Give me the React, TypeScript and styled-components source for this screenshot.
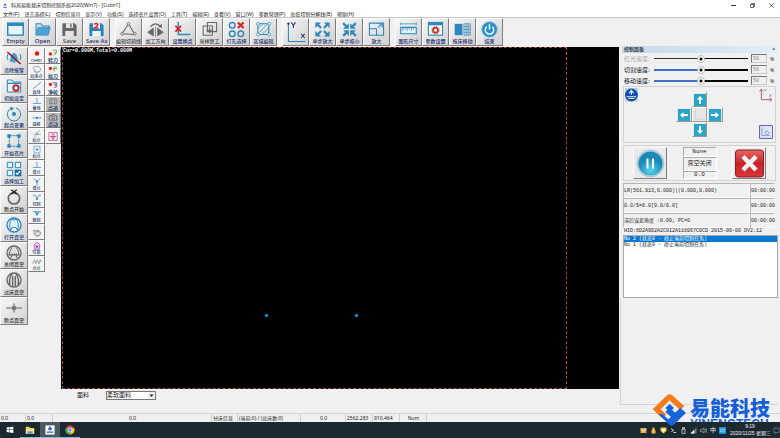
import React from "react";
import styled, { createGlobalStyle, css } from "styled-components";

const sans = `"Noto Sans", "Noto Sans CJK SC", sans-serif`;
const narrow = `"Liberation Sans", "Noto Sans CJK SC", sans-serif`;
const mono = `"Liberation Mono", "Noto Sans CJK SC", monospace`;

const GlobalStyle = createGlobalStyle`
  * { box-sizing: border-box; }
  body { margin: 0; background: #f0f0f0; }
  button, input, select { font-family: inherit; margin: 0; border-radius: 0; }
`;

const Desktop = styled.div`
  position: relative;
  display: flex;
  flex-direction: column;
  min-height: 100vh;
  background: #f0f0f0;
  color: #1c1c1c;
  font: 5px/8px ${sans};
  white-space: nowrap;
  overflow: hidden;
`;

/* ---------- window frame ---------- */
const TitleBar = styled.header`
  display: flex;
  align-items: center;
  height: 10px;
  padding: 0 1px 0 2px;
  gap: 3px;
  background: #fff;
`;
const Title = styled.h1`
  flex: 1;
  margin: 0;
  font: inherit;
`;
const CaptionButton = styled.button`
  display: grid;
  place-items: center;
  width: 16px;
  height: 9px;
  padding: 0;
  border: 0;
  background: none;
  svg { width: 5px; height: 5px; }
`;
const MenuBar = styled.nav`
  display: flex;
  height: 8px;
  padding: 0 3px;
  gap: 5px;
  background: #fff;
  border-bottom: 1px solid #c8c8c8;
  font-family: ${narrow};
`;
const MenuItem = styled.button`
  padding: 0;
  border: 0;
  background: none;
  color: #222;
  font-size: 5px;
  line-height: 6px;
`;

/* ---------- toolbar ---------- */
const Toolbar = styled.div`
  display: flex;
  gap: 5px;
  height: 28px;
  padding: 0 2px;
`;
const ToolGroup = styled.div`
  display: flex;
`;
const tile = css`
  display: flex;
  flex-direction: column;
  align-items: center;
  padding: 0;
  border: 1px solid #fafafa;
  border-right-color: #7d7d7d;
  border-bottom-color: #7d7d7d;
  background: linear-gradient(135deg, #f8f8f8, #cfcfcf);
`;
const ToolButton = styled.button<{ $muted?: boolean; $latin?: boolean }>`
  ${tile}
  width: 27px;
  height: 28px;
  color: ${(p) => (p.$muted ? "#3c3c3c" : "#1d2f6e")};
  font-size: ${(p) => (p.$latin ? "6px" : "5px")};
  font-weight: 500;
  line-height: 7px;
  svg { width: 19px; height: 17px; margin-top: 2px; flex: none; }
  span { z-index: 1; }
`;

/* ---------- workspace ---------- */
const Workspace = styled.main`
  display: flex;
  flex: 1;
`;
const SideTools = styled.aside`
  display: flex;
  align-items: flex-start;
  width: 61px;
  padding-top: 1px;
`;
const MainSteps = styled.div`
  display: grid;
  grid-template-rows: repeat(10, 1fr);
  width: 28px;
  height: 278px;
`;
const StepButton = styled.button<{ $muted?: boolean }>`
  ${tile}
  justify-content: space-between;
  min-height: 0;
  padding: 2px 0 1px;
  color: ${(p) => (p.$muted ? "#333" : "#1c3a78")};
  font-size: 5px;
  font-weight: 500;
  line-height: 6px;
  svg { width: 18px; height: 16px; flex: none; }
`;
const SmallColumn = styled.div<{ $wide?: boolean }>`
  display: flex;
  flex-direction: column;
  width: ${(p) => (p.$wide ? "16px" : "17px")};
  padding-top: 1px;
`;
const SmallButton = styled.button<{ $pressed?: boolean; $bold?: boolean }>`
  ${tile}
  justify-content: center;
  height: 16px;
  background: ${(p) => (p.$pressed ? "#b9b9b9" : "#f4f4f4")};
  color: #26406f;
  font-size: ${(p) => (p.$bold ? "5px" : "4px")};
  font-weight: ${(p) => (p.$bold ? 700 : 500)};
  line-height: 5px;
  svg { width: 12px; height: 9px; flex: none; }
`;

const CanvasColumn = styled.section`
  display: flex;
  flex-direction: column;
  flex: 1;
  min-width: 0;
`;
const Stage = styled.div`
  display: flex;
  flex: 1;
  margin-top: 1px;
  padding: 0 52px 0 1px;
  background: #000;
`;
const CutArea = styled.div`
  position: relative;
  flex: 1;
  border: 1px dashed #a04848;
  color: #fff;
  font: 700 5px/7px ${mono};
`;
const Marker = styled.i<{ $x: number; $y: number }>`
  position: absolute;
  left: ${(p) => p.$x}%;
  top: ${(p) => p.$y}%;
  width: 3px;
  height: 3px;
  background: #1490d8;
  transform: rotate(45deg);
`;
const FabricRow = styled.div`
  display: flex;
  align-items: flex-start;
  gap: 17px;
  height: 24px;
  padding: 2px 16px 0;
  label { font-size: 6px; line-height: 8px; }
`;
const SelectBox = styled.div`
  display: flex;
  align-items: center;
  width: 50px;
  height: 9px;
  border: 1px solid #777;
  background: #fff;
  select {
    flex: 1;
    min-width: 0;
    height: 7px;
    padding: 0;
    border: 0;
    appearance: none;
    background: none;
    color: #222;
    font-size: 6px;
    line-height: 7px;
  }
  svg { width: 7px; height: 7px; background: #eee; flex: none; }
`;

/* ---------- control panel ---------- */
const Panel = styled.aside`
  display: flex;
  flex-direction: column;
  width: 161px;
  padding: 0 2px 8px 3px;
`;
const PanelTitle = styled.h2`
  display: flex;
  justify-content: space-between;
  height: 7px;
  margin: 0;
  padding: 0 3px 0 2px;
  background: linear-gradient(90deg, #c5d8ea, #e3edf6);
  font: 500 5px/7px ${sans};
`;
const SliderRow = styled.div<{ $off?: boolean }>`
  display: grid;
  grid-template-columns: 29px 94px 16px 4px;
  align-items: center;
  column-gap: 3px;
  height: 11px;
  label, span { font-size: 6px; line-height: 8px; }
  label { padding-left: 2px; color: ${(p) => (p.$off ? "#aaa" : "#111")}; }
  span { font-size: 5px; }
`;
const Slider = styled.input<{ $off?: boolean }>`
  appearance: none;
  width: 100%;
  height: 8px;
  margin: 0;
  background:
    linear-gradient(90deg, ${(p) => (p.$off ? "#333" : "#3f70d0")} 50%, #080808 50%)
    center / 100% ${(p) => (p.$off ? "1px" : "2px")} no-repeat;
  &::-webkit-slider-thumb {
    appearance: none;
    width: 8px;
    height: 8px;
    border: 1px solid #bbb;
    border-radius: 50%;
    background: radial-gradient(circle, #111 0 1px, #fff 2px);
  }
`;
const ValueBox = styled.input`
  width: 16px;
  height: 9px;
  padding: 0 1px;
  border: 1px solid #c9c9c9;
  border-top-color: #777;
  border-left-color: #777;
  background: #efefef;
  color: #888;
  font: 5px/7px ${mono};
`;
const Group = styled.div`
  border: 1px solid #d2d2d2;
  margin: 0 2px 0 1px;
`;
const JogGroup = styled(Group)`
  display: flex;
  justify-content: space-between;
  height: 57px;
`;
const CornerStack = styled.div`
  display: flex;
  flex-direction: column;
  justify-content: space-between;
  padding: 1px 2px 3px 1px;
  svg { display: block; width: 14px; height: 14px; }
`;
const JogPad = styled.div`
  display: grid;
  grid-template-columns: 16px 15px 16px;
  grid-template-rows: 15px 15px 15px;
  grid-template-areas: ". up ." "left mid right" ". down .";
  padding: 5px 0;
`;
const JogButton = styled.button<{ $area: string }>`
  grid-area: ${(p) => p.$area};
  display: grid;
  place-items: center;
  padding: 0;
  border: 1px solid #f7f7f7;
  border-right-color: #999;
  border-bottom-color: #999;
  background: #e6e6e6;
  svg { width: 12px; height: 12px; }
`;
const RunGroup = styled(Group)`
  display: flex;
  justify-content: space-between;
  height: 36px;
  margin-top: 2px;
  padding: 1px 9px;
`;
const RunButton = styled.button`
  ${tile}
  justify-content: center;
  width: 34px;
  height: 32px;
  background: #e9e9e9;
  svg { width: 31px; height: 29px; }
`;
const StatusStack = styled.div`
  display: grid;
  grid-template-rows: 10px 14px 8px;
  width: 34px;
  text-align: center;
  font: 6px/6px ${mono};
  output {
    display: grid;
    place-items: center;
    border: 1px solid #fff;
    border-top-color: #aaa;
    border-left-color: #aaa;
  }
`;
const Readout = styled.table`
  width: 152px;
  margin: 2px 2px 0 1px;
  border-collapse: separate;
  border-spacing: 0;
  table-layout: fixed;
  font: 5px/6px ${mono};
  td {
    height: 15px;
    padding: 0;
    border: 1px solid #fbfbfb;
    border-top-color: #b5b5b5;
    border-left-color: #b5b5b5;
  }
  td + td { width: 25px; }
`;
const HardwareId = styled.p`
  margin: 0 0 1px 2px;
  font: 5px/6px ${mono};
`;
const LogList = styled.ul`
  height: 63px;
  margin: 0 0 0 1px;
  padding: 0;
  list-style: none;
  border: 1px solid #aaa;
  background: #fff;
  font: 5px/6px ${mono};
`;
const LogItem = styled.li<{ $selected?: boolean }>`
  height: 6px;
  background: ${(p) => (p.$selected ? "#0a78d4" : "transparent")};
  color: ${(p) => (p.$selected ? "#fff" : "#222")};
`;
const DockEdge = styled.div`
  flex: 1;
  border: solid #d4d4d4;
  border-width: 0 0 1px 1px;
  margin-left: -2px;
`;

/* ---------- status bar and taskbar ---------- */
const StatusBar = styled.footer`
  display: grid;
  grid-template-columns: 26px 27px 159px 26px 63px 45px 27px 27px 27px 1fr;
  height: 9px;
  border-top: 1px solid #d6d6d6;
  font-size: 5px;
  line-height: 8px;
  span { padding-left: 1px; border-right: 1px solid #cfcfcf; }
  span:last-child { border: 0; }
`;
const Centered = styled.span`
  text-align: center;
`;
const Taskbar = styled.footer`
  position: relative;
  z-index: 2;
  display: flex;
  align-items: stretch;
  height: 16px;
  background: #1a2a30;
  color: #f2f5f6;
`;
const TaskButton = styled.button<{ $active?: boolean; $running?: boolean }>`
  display: grid;
  place-items: center;
  width: 20px;
  padding: 0;
  border: 0;
  border-bottom: 1px solid ${(p) => (p.$running ? "#78b8e0" : "transparent")};
  background: ${(p) => (p.$active ? "#4b5960" : "none")};
  svg { width: 10px; height: 10px; }
`;
const Tray = styled.div`
  display: flex;
  align-items: center;
  gap: 3px;
  margin-left: auto;
  font-size: 6px;
  svg { width: 7px; height: 7px; }
`;
const Clock = styled.time`
  width: 40px;
  margin-left: 1px;
  text-align: center;
  font: 5px/7px ${narrow};
`;

/* ---------- brand overlay ---------- */
const BrandMark = styled.svg`
  position: absolute;
  z-index: 3;
  right: 93px;
  bottom: 11px;
  width: 35px;
  height: 33px;
`;
const BrandText = styled.div`
  position: absolute;
  z-index: 1;
  right: 10px;
  bottom: 9px;
  width: 80px;
  color: #1560d8;
  font: 900 20px/23px "Noto Sans CJK SC", sans-serif;
  small {
    display: block;
    font: 700 12px/10px "Liberation Sans", sans-serif;
  }
`;

/* ---------- drawings ---------- */
const B = "#2d86bd";
const G = "#666";
const R = "#d22";

const art: Record<string, React.ReactNode> = {
  window: <><rect x="1" y="3" width="22" height="17" fill="#e4f2fa" stroke={B} strokeWidth="2" /><path d="M1 5h22" stroke={B} strokeWidth="4" /></>,
  folder: <><path d="M3 20V4h7l2 3h9v4" fill="#c6e3f4" stroke={B} strokeWidth="1.5" /><path d="M3 20 6 9h17l-3 11z" fill="#4da1d6" stroke={B} /></>,
  save: <><path d="M2 3h17l3 3v15H2z" fill={G} /><path d="M7 3h10v7H7zM6 14h12v7H6z" fill="#e6e6e6" /><path d="M13 4h2v5h-2z" fill={G} /></>,
  saveAs: <><path d="M2 3h17l3 3v15H2z" fill="#2783c0" /><path d="M7 3h10v8H7zM6 14h12v7H6z" fill="#eef6fb" /><path d="M9 5q3-3 5 0 0 2-5 5h6" fill="none" stroke={R} strokeWidth="2" /></>,
  triangle: <><path d="M12 4 3 18l18 1z" fill="none" stroke={G} strokeWidth="1.5" /><g fill="#ddd" stroke={G}><circle cx="12" cy="4" r="2" /><circle cx="3" cy="18" r="2" /><circle cx="21" cy="18" r="2" /></g></>,
  flip: <><path d="M12 8v15M9 10v11L1 16zM15 10v11l8-5z" fill={G} stroke={G} /><path d="M5 8q7-8 14 0" fill="none" stroke={G} strokeWidth="2" /><path d="m16 8 5 2V4z" fill={G} /></>,
  origin: <><path d="M6 1v18h17" fill="none" stroke={B} strokeWidth="2" /><path d="m2 7 8 8m0-8-8 8" stroke={R} strokeWidth="2.5" /></>,
  sample: <><path d="M3 7h13v13H3zM9 2h13v13H9z" fill="none" stroke={G} strokeWidth="1.5" /><path d="M8 13h8m-4-4v8" stroke={G} strokeWidth="1.5" /></>,
  holes: <><g fill="none" stroke={B} strokeWidth="2"><circle cx="6" cy="6" r="4" /><circle cx="6" cy="18" r="4" /><circle cx="18" cy="18" r="4" /></g><path d="m14 2 8 8m0-8-8 8" stroke={R} strokeWidth="3" /></>,
  region: <><path d="M4 4h16l-1 15H4z" fill="none" stroke={B} strokeWidth="1.5" /><path d="M4 11 11 4M4 18 18 4M10 19 20 9" stroke={B} /><g fill="#fff" stroke={B}><circle cx="4" cy="4" r="2" /><circle cx="20" cy="4" r="2" /><circle cx="4" cy="19" r="2" /><circle cx="20" cy="19" r="2" /></g></>,
  expand: <><path d="m10 10-6-6m10 6 6-6M10 14l-6 6m10-6 6 6" stroke={B} strokeWidth="3" /><path d="M2 2h8L2 10zm20 0v8l-8-8zM2 22v-8l8 8zm20 0h-8l8-8z" fill={B} /></>,
  shrink: <><path d="m3 3 6 6m12-6-6 6M3 21l6-6m12 6-6-6" stroke={B} strokeWidth="3" /><path d="M11 11H3l8-8zm2 0V3l8 8zm-2 2v8l-8-8zm2 0h8l-8 8z" fill={B} /></>,
  zoom: <><path d="M2 3h20v17H2z" fill="none" stroke={B} strokeWidth="1.5" /><path d="M2 11h10v9M14 9l6-5m-5 0h5v5" fill="none" stroke={B} strokeWidth="1.5" /></>,
  ruler: <><path d="M1 4h22M1 2v4m22-4v4" stroke={B} /><path d="M1 9h22v9H1z" fill="#dff0f8" stroke={B} strokeWidth="1.5" /><path d="M4 9v5m3-5v3m3-3v5m3-5v3m3-3v5m3-5v3" stroke={B} /></>,
  settings: <><rect x="2" y="2" width="20" height="18" fill="#edf6fa" stroke={B} strokeWidth="1.5" /><path d="M2 4h20" stroke={B} strokeWidth="4" /><circle cx="12" cy="13" r="3.5" fill="none" stroke="#c32" strokeWidth="2.5" /><circle cx="12" cy="13" r="5.3" fill="none" stroke="#c32" strokeDasharray="2 2.2" /></>,
  bed: <><path d="M1 4h11v16H1z" fill={B} /><path d="M14 4h9v16h-9zm3 0v16m3-16v16m-6-12h9m-9 4h9m-9 4h9" fill="none" stroke={B} /></>,
  power: <><circle cx="12" cy="12" r="11" fill="#2b8fca" stroke="#8cbfdd" /><path d="M8 8a6 6 0 1 0 8 0M12 4v8" fill="none" stroke="#fff" strokeWidth="2" /></>,
  bell: <><path d="M6 17c2-2 1-5 2-8 1-5 7-5 8 0 1 3 0 6 2 8zM10 19h4" fill="#4b9ad0" stroke={B} /><path d="M3 6q-3 5 0 9M21 6q3 5 0 9" stroke={B} strokeWidth="1.5" fill="none" /><path d="m2 3 20 18" stroke="#822838" strokeWidth="2.5" /></>,
  folderGear: <><path d="M2 21V3h7l2 3h11v15z" fill="#edf6fa" stroke={B} strokeWidth="1.5" /><path d="M2 8h20" stroke={B} strokeWidth="2" /><circle cx="15" cy="15" r="4" fill="#fff" stroke="#b42b38" strokeWidth="3" /></>,
  rotate: <><path d="M9 3a10 10 0 1 0 6 0" fill="none" stroke={B} strokeWidth="1.5" /><path d="m6 1 6 2-4 4z" fill={B} /><circle cx="12" cy="12" r="3" fill={B} /></>,
  nodes: <><path d="M5 4h14v16H5z" fill="none" stroke={B} strokeWidth="1.5" strokeDasharray="4 1" /><path d="M2 2h5v5H2zm15 0h5v5h-5zM2 17h5v5H2zm15 0h5v5h-5z" fill={B} /></>,
  pick: <><path d="M2 2h8v8H2zm12 0h8v8h-8zM2 14h8v8H2z" fill="#e9f4fa" stroke={B} strokeWidth="1.5" /><path d="M13 13h10v10H13z" fill="#1869a5" /><path d="m15 18 2 2 4-5" fill="none" stroke="#fff" strokeWidth="2" /></>,
  breakPt: <><circle cx="12" cy="14" r="8.5" fill="none" stroke="#666" strokeWidth="2.5" /><path d="m8 1 8 7m0-7L8 8" stroke="#222" strokeWidth="2" /></>,
  vacOn: <><circle cx="12" cy="12" r="10.5" fill="#daeef8" stroke={B} strokeWidth="2" /><path d="M9 3C5 8 5 15 7 20M15 3c4 5 4 12 2 17M9 3c2 2 4 2 6 0M7 20l2-4h6l2 4" fill="#fff" stroke={B} strokeWidth="1.5" /></>,
  vacOff: <><circle cx="12" cy="12" r="10.5" fill="#ddd" stroke={G} strokeWidth="2" /><path d="M9 4C5 9 5 11 5 14h14c0-4 0-6-4-10M3 15h18M7 20l2-5m8 5-2-5" fill="none" stroke={G} strokeWidth="1.5" /></>,
  vacBed: <><circle cx="12" cy="12" r="10.5" fill="#ddd" stroke={G} strokeWidth="2" /><path d="M9 3C4 9 5 15 6 20M15 3c5 6 4 12 3 17M10 6v15m4-15v15" fill="none" stroke={G} strokeWidth="2" /></>,
  vacPt: <><path d="M0 12h24M12 5v14" stroke={G} strokeWidth="1.5" /><circle cx="12" cy="12" r="3.5" fill="#777" /></>,
  dotRed: <circle cx="12" cy="12" r="6" fill="#e01818" />,
  start: <path d="M6 4h11l5 6-3 8h-5l-3 4-1-4H5l2-6-5-3z" fill="none" stroke="#568" strokeWidth="1.5" />,
  line: <path d="M1 21 23 3" stroke={B} strokeWidth="2" />,
  perp: <path d="M1 17h22M12 3v14" stroke={B} strokeWidth="2" />,
  horiz: <><path d="M0 13h24" stroke={B} strokeWidth="2" /><circle cx="12" cy="13" r="3" fill={B} /></>,
  cross: <path d="M2 14h20M5 22 19 3m-9 5 5 8" stroke="#678" strokeWidth="1.5" />,
  box: <><path d="M4 3h16v18H4z" fill="none" stroke={B} strokeWidth="1.5" /><circle cx="12" cy="12" r="3" fill={B} /></>,
  yNode: <><path d="M3 4l9 8 9-8m-9 8v11" fill="none" stroke={B} strokeWidth="2" /><circle cx="12" cy="12" r="3" fill={B} /></>,
  vGreen: <><path d="M1 6h6l5 9 5-9h6" fill="none" stroke={B} strokeWidth="2" /><circle cx="12" cy="16" r="3" fill="#32a457" /></>,
  vBlue: <path d="M1 7h6l5 10 5-10h6M8 7h8l-4 7z" fill={B} stroke={B} strokeWidth="2" />,
  hand: <path d="M5 11C1 7 4 4 8 7l5 3V6q3-2 3 2 6 1 5 7c-1 8-12 9-14 3l-3-4q0-3 4-1" fill="#ddd" stroke="#666" strokeWidth="2" />,
  house: <><path d="m3 12 9-9 9 9M6 11v11h12V11" fill="#f5d9f4" stroke="#a32fb3" strokeWidth="2" /><circle cx="12" cy="15" r="3" fill="#a32fb3" /></>,
  wave: <path d="m1 18 4-11 4 11 4-11 4 11 4-11 2 7" fill="none" stroke="#888" strokeWidth="2" />,
  knifeG: <><path d="M12 3h9v7l-8 7M15 10h7" fill="none" stroke="#62a52b" strokeWidth="2.5" /><circle cx="5" cy="13" r="4.5" fill="#e01818" /></>,
  knifeR: <><path d="M15 4v14m-4-8h12M20 3v8" stroke="#62a52b" strokeWidth="2.5" /><circle cx="5" cy="9" r="4.5" fill="#e01818" /></>,
  wheel: <><path d="M11 5h11v10l-7 3" fill="none" stroke="#a532c1" strokeWidth="2.5" /><circle cx="5" cy="9" r="4.5" fill="#e01818" /><circle cx="18" cy="10" r="3" fill="#62a52b" /></>,
  frame: <path d="M3 5h18v13H3zM8 5v13m8-13v13" fill="none" stroke="#777" strokeWidth="2" />,
  camera: <><path d="M2 7h5l2-3h7l2 3h4v12H2z" fill="none" stroke="#555" strokeWidth="2" /><circle cx="12" cy="12" r="4" fill="none" stroke="#555" strokeWidth="2" /></>,
  flow: <><path d="M1 1h9v7l-5 5h5v10H1zM23 1h-9v7l5 5h-5v10h9z" fill="#fff" stroke="#c5306a" strokeWidth="2" /><path d="M7 12h10" stroke="#8230b0" strokeWidth="2" /></>,
};

const Icon = ({ name }: { name: string }) => (
  <svg viewBox="0 0 24 24" aria-hidden="true" fill="none">{art[name]}</svg>
);
const AxisIcon = () => (
  <svg viewBox="0 0 24 24" aria-hidden="true" overflow="visible">
    <path d="M2 6v23h24" fill="none" stroke={B} strokeWidth="1.5" />
    <path d="m6 2 3 4 3-4M9 6v4M20 18l5 6m0-6-5 6M0 4h4M2 2v4" stroke="#26356f" strokeWidth="1.5" fill="none" />
  </svg>
);
const Arrow = ({ turn }: { turn: number }) => (
  <svg viewBox="0 0 24 24" aria-hidden="true">
    <rect width="24" height="24" fill="#2aa5c8" />
    <path transform={`rotate(${turn} 12 12)`} d="m12 4 6 7h-4v9h-4v-9H6z" fill="#fff" />
  </svg>
);

/* ---------- data ---------- */
const menus = ["文件(F)", "语言选择(L)", "切割信息(I)", "显示(V)", "功能(S)", "选择衣片设置(O)", "工具(T)", "编辑(E)", "查看(V)", "窗口(W)", "参数管理(P)", "高低切割分解线(B)", "帮助(H)"];

type Tool = { icon: string; text: string; muted?: boolean; latin?: boolean };
const toolGroups: Tool[][] = [
  [
    { icon: "window", text: "Empty", latin: true },
    { icon: "folder", text: "Open", latin: true },
    { icon: "save", text: "Save", latin: true, muted: true },
    { icon: "saveAs", text: "Save As", latin: true },
  ],
  [
    { icon: "triangle", text: "编辑切割线", muted: true },
    { icon: "flip", text: "加工方向", muted: true },
    { icon: "origin", text: "设置换点" },
    { icon: "sample", text: "采样复工", muted: true },
    { icon: "holes", text: "打孔选择" },
    { icon: "region", text: "区域编辑" },
  ],
  [
    { icon: "axis", text: "" },
    { icon: "expand", text: "单步放大" },
    { icon: "shrink", text: "单步缩小" },
    { icon: "zoom", text: "放大" },
  ],
  [
    { icon: "ruler", text: "图形尺寸" },
    { icon: "settings", text: "参数设置" },
    { icon: "bed", text: "拖床移动" },
    { icon: "power", text: "结束" },
  ],
];
const steps: Tool[] = [
  { icon: "bell", text: "清除报警" },
  { icon: "folderGear", text: "初始设定" },
  { icon: "rotate", text: "起点变更" },
  { icon: "nodes", text: "开始衣片" },
  { icon: "pick", text: "选择加工" },
  { icon: "breakPt", text: "断点开始", muted: true },
  { icon: "vacOn", text: "打开真空" },
  { icon: "vacOff", text: "关闭真空", muted: true },
  { icon: "vacBed", text: "过床真空", muted: true },
  { icon: "vacPt", text: "断点真空", muted: true },
];
const smallTools = [
  ["dotRed", "CHRD"], ["start", "起落点"], ["line", "直线"], ["perp", "垂线"], ["horiz", "端移"],
  ["cross", "起点"], ["box", "起点"], ["perp", "增点"], ["yNode", "增点"], ["vGreen", "切刻"],
  ["vBlue", "删刻"], ["hand", ""], ["house", "性能"], ["wave", "点点"],
];
const knifeTools: [string, string, boolean][] = [
  ["knifeG", "转刀", false], ["knifeR", "抬刀", false], ["wheel", "净轮", false],
  ["frame", "点追", true], ["camera", "点动", true], ["flow", "", false],
];
const sliders = [
  { id: "red", text: "红光速度:", off: true },
  { id: "cut", text: "切割速度:", off: false },
  { id: "move", text: "移动速度:", off: false },
];
const readouts = [
  "LR(561.913,0.000)|(0.000,0.000)",
  "0.0/S=0.0[0.0/0.0]",
  "滞后误差角度 :0.00, PC=0",
];

export default function App() {
  return (
    <Desktop>
      <GlobalStyle />
      <TitleBar>
        <svg width="6" height="7" viewBox="0 0 12 14" aria-hidden="true">
          <path d="M6 2v7M2 11h8M3 8l3-4 3 4" fill="none" stroke="#3a6fa8" strokeWidth="1.5" />
        </svg>
        <Title>科昌易能裁床切割控制系统2020(Win7) - [Cutin1]</Title>
        <CaptionButton aria-label="最小化"><svg viewBox="0 0 10 10"><path d="M0 5h10" stroke="#333" strokeWidth="2" /></svg></CaptionButton>
        <CaptionButton aria-label="还原"><svg viewBox="0 0 10 10"><path d="M1 3h6v6H1zM3 3V1h6v6H7" fill="none" stroke="#333" strokeWidth="1.5" /></svg></CaptionButton>
        <CaptionButton aria-label="关闭"><svg viewBox="0 0 10 10"><path d="m1 1 8 8m0-8-8 8" stroke="#333" strokeWidth="1.5" /></svg></CaptionButton>
      </TitleBar>
      <MenuBar>{menus.map((m) => <MenuItem key={m}>{m}</MenuItem>)}</MenuBar>

      <Toolbar>
        {toolGroups.map((group, i) => (
          <ToolGroup key={i}>
            {group.map((t) => (
              <ToolButton key={t.icon} $muted={t.muted} $latin={t.latin} aria-label={t.text || "坐标轴"}>
                {t.icon === "axis" ? <AxisIcon /> : <Icon name={t.icon} />}
                <span>{t.text}</span>
              </ToolButton>
            ))}
          </ToolGroup>
        ))}
      </Toolbar>

      <Workspace>
        <SideTools>
          <MainSteps>
            {steps.map((s) => (
              <StepButton key={s.text} $muted={s.muted}><Icon name={s.icon} />{s.text}</StepButton>
            ))}
          </MainSteps>
          <SmallColumn>
            {smallTools.map(([icon, text], i) => (
              <SmallButton key={i} aria-label={text || "拖动"}><Icon name={icon} />{text}</SmallButton>
            ))}
          </SmallColumn>
          <SmallColumn $wide>
            {knifeTools.map(([icon, text, pressed]) => (
              <SmallButton key={icon} $bold $pressed={pressed} aria-label={text || "流程"}><Icon name={icon} />{text}</SmallButton>
            ))}
          </SmallColumn>
        </SideTools>

        <CanvasColumn>
          <Stage>
            <CutArea>
              Cur=0.000M,Total=0.000M
              <Marker $x={40.2} $y={78.2} />
              <Marker $x={58.1} $y={78.2} />
            </CutArea>
          </Stage>
          <FabricRow>
            <label htmlFor="fabric">面料</label>
            <SelectBox>
              <select id="fabric" defaultValue="soft"><option value="soft">柔软面料</option></select>
              <svg viewBox="0 0 14 14" aria-hidden="true"><path d="M3 5h8l-4 5z" fill="#222" /></svg>
            </SelectBox>
          </FabricRow>
        </CanvasColumn>

        <Panel>
          <PanelTitle>控制面板<span>×</span></PanelTitle>
          {sliders.map((s) => (
            <SliderRow key={s.id} $off={s.off}>
              <label htmlFor={s.id}>{s.text}</label>
              <Slider id={s.id} type="range" defaultValue={50} $off={s.off} />
              <ValueBox defaultValue="50" aria-label={s.text} />
              <span>%</span>
            </SliderRow>
          ))}
          <JogGroup>
            <CornerStack>
              <svg viewBox="0 0 24 24" aria-hidden="true">
                <rect width="22" height="23" fill="#bcd0e8" /><circle cx="11" cy="12" r="11" fill="#1250ae" />
                <path d="M11 3v8M7 9l4-5 4 5M3 15h16M6 18h10" stroke="#e6f0ff" strokeWidth="2" fill="none" />
              </svg>
            </CornerStack>
            <JogPad>
              <JogButton $area="up" aria-label="上"><Arrow turn={0} /></JogButton>
              <JogButton $area="left" aria-label="左"><Arrow turn={270} /></JogButton>
              <JogButton $area="mid" aria-label="原点">
                <svg viewBox="0 0 24 24"><path d="M3 3v18h18" fill="none" stroke="#d9a79b" strokeDasharray="3 2" /></svg>
              </JogButton>
              <JogButton $area="right" aria-label="右"><Arrow turn={90} /></JogButton>
              <JogButton $area="down" aria-label="下"><Arrow turn={180} /></JogButton>
            </JogPad>
            <CornerStack>
              <svg viewBox="0 0 24 24" aria-hidden="true">
                <path d="M4 3v17h17M1 6l3-4 3 4M18 17l4 3-4 3" fill="none" stroke="#a04a7a" strokeWidth="1.5" />
                <path d="M9 2l2 3 2-3M18 11l3 4m0-4-3 4" stroke="#5a5ac0" fill="none" />
              </svg>
              <svg viewBox="0 0 24 24" aria-hidden="true">
                <rect x="1" y="1" width="22" height="22" fill="#dbe5f6" stroke="#48598f" strokeWidth="1.5" />
                <path d="M5 4v14h14M10 12q4-5 7 2l-3 3z" fill="none" stroke="#8395c2" strokeWidth="1.5" />
              </svg>
            </CornerStack>
          </JogGroup>
          <RunGroup>
            <RunButton aria-label="暂停">
              <svg viewBox="0 0 60 58">
                <defs><radialGradient id="orb" cy=".8"><stop offset="0" stopColor="#5cd4ee" /><stop offset="1" stopColor="#1c88b8" /></radialGradient></defs>
                <circle cx="30" cy="29" r="27" fill="#b8d5e0" stroke="#8faab5" /><circle cx="30" cy="29" r="24" fill="url(#orb)" />
                <path d="M22 19h4v20h-4zM33 19h4v20h-4z" fill="#fff" />
              </svg>
            </RunButton>
            <StatusStack>
              <output>None</output><output>真空关闭</output><output>0.0</output>
            </StatusStack>
            <RunButton aria-label="停止">
              <svg viewBox="0 0 60 58">
                <defs><linearGradient id="stop" x2="0" y2="1"><stop offset="0" stopColor="#e46862" /><stop offset=".5" stopColor="#c92126" /><stop offset="1" stopColor="#d9373a" /></linearGradient></defs>
                <rect x="2" y="2" width="56" height="54" rx="6" fill="url(#stop)" stroke="#8e1b20" strokeWidth="2" />
                <path d="m17 15 26 27m0-27L17 42" stroke="#f2f2f2" strokeWidth="9" />
              </svg>
            </RunButton>
          </RunGroup>
          <Readout>
            <tbody>
              {readouts.map((r) => <tr key={r}><td>{r}</td><td>00:00:00</td></tr>)}
            </tbody>
          </Readout>
          <HardwareId>HID:6D2A9D2A2C012A116067C0CD 2015-00-00 DV2.12</HardwareId>
          <LogList>
            <LogItem $selected>No 2 (状态0 - 终止当前切割任务)</LogItem>
            <LogItem>No 1 (状态0 - 终止当前切割任务)</LogItem>
          </LogList>
          <DockEdge />
        </Panel>
      </Workspace>

      <StatusBar>
        <span>0.0</span><span>0.0</span>
        <Centered>0.0</Centered>
        <span>分床信息</span><span>(当前:0) / (总床数:0)</span>
        <Centered>0.0</Centered>
        <span>2562.283</span><span>910.464</span>
        <Centered>Num</Centered><span />
      </StatusBar>

      <Taskbar>
        <TaskButton aria-label="开始"><svg viewBox="0 0 24 24"><path d="m4 6 7-1v6H4zm8-1 8-1v7h-8zm-8 7h7v6l-7-1zm8 0h8v7l-8-1z" fill="#fff" /></svg></TaskButton>
        <TaskButton $running aria-label="文件资源管理器"><svg viewBox="0 0 24 24"><path d="M2 4h8l2 3h10v14H2z" fill="#f5cf58" /><path d="M2 10h20v11H2z" fill="#fbe28b" /><path d="M6 15h12v6H6z" fill="#4a9bd0" /></svg></TaskButton>
        <TaskButton $active $running aria-label="切割控制系统"><svg viewBox="0 0 24 24"><path d="M1 1h22v22H1z" fill="#fff" /><path d="M12 4v9M8 11l4-6 4 6M4 17h16" stroke="#2860b8" strokeWidth="3" fill="none" /></svg></TaskButton>
        <TaskButton $running aria-label="Chrome"><svg viewBox="0 0 24 24"><circle cx="12" cy="12" r="11" fill="#e54335" /><path d="M2 7a11 11 0 0 0 9 16l5-9-4-2z" fill="#35a853" /><path d="M12 23a11 11 0 0 0 10-15H12l4 6z" fill="#fbc116" /><circle cx="12" cy="12" r="5" fill="#4a87ee" stroke="#fff" strokeWidth="2" /></svg></TaskButton>
        <Tray>
          <svg viewBox="0 0 14 14"><path d="M1 2h12v10H1z" fill="#e8a850" /><path d="m2 4 5 4 5-4" stroke="#fff" fill="none" strokeWidth="2" /></svg>
          <svg viewBox="0 0 14 14"><path d="M5 1h4v3l2 3v6H3V7l2-3z" fill="#f0b83c" /></svg>
          <svg viewBox="0 0 14 14"><path d="M1 1h12v7l-6 5-6-5z" fill="#f5c83c" /><path d="M4 4h6v3l-3 3-3-3z" fill="#fff" /></svg>
          <svg viewBox="0 0 14 14"><path d="m2 3 5 4-4 2m4 2h5" fill="none" stroke="#ddd" strokeWidth="2" /></svg>
          <svg viewBox="0 0 14 14"><path d="M4 4h6v9H4zM5 1h4v3H5z" fill="none" stroke="#ddd" strokeWidth="1.5" /></svg>
          <svg viewBox="0 0 14 14"><path d="M1 13 13 1v12z" fill="#738087" /><path d="M1 13 8 6v7z" fill="#fff" /></svg>
          <svg viewBox="0 0 14 14"><path d="M1 5h3l4-3v10L4 9H1zM10 4q3 3 0 6M12 2q4 5 0 10" fill="none" stroke="#ddd" /></svg>
          <span>中</span>
          <svg viewBox="0 0 14 14"><path d="M0 0h14v14H0z" fill="#1b95e0" /><path d="M3 4h3v6H3zm5 0h3v6H8z" fill="none" stroke="#bfe4fa" /></svg>
          <Clock>9:19<br />2020/11/25 星期三</Clock>
          <svg viewBox="0 0 14 14"><path d="M2 2h10v9H7l-3 2v-2H2z" fill="none" stroke="#aab" /></svg>
        </Tray>
      </Taskbar>

      <BrandText>易能科技<small>YINENGTECH</small></BrandText>
      <BrandMark viewBox="0 0 105 99" aria-hidden="true">
        <path d="M2 46 46 3q7-5 14 0l37 34-13 11-31-29-27 27 17 16-12 11z" fill="#f47a1b" />
        <path d="m19 61 34 32q6 5 12 0l37-37-17-14-16 14-15-15-14 12 17 16-8 7-18-16z" fill="#1764d8" />
        <path d="m40 42 13-12 13 12-13 12z" fill="#1764d8" />
      </BrandMark>
    </Desktop>
  );
}
